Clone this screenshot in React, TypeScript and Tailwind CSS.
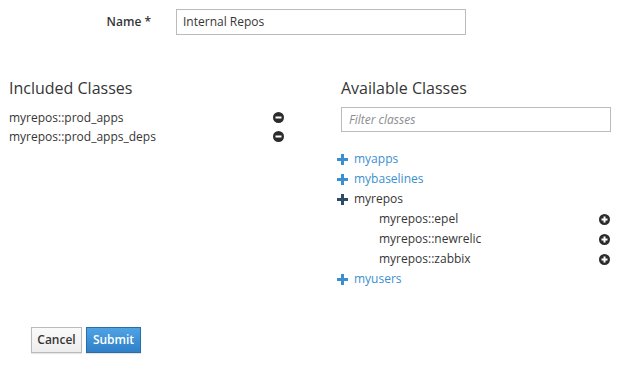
import React from "react";

const font = { fontFamily: '"Open Sans", "Noto Sans", sans-serif' };

function Plus({ color }: { color: string }) {
  return (
    <svg width="11" height="11" viewBox="0 0 11 11" className="shrink-0">
      <rect x="4" y="0" width="3" height="11" fill={color} />
      <rect x="0" y="4" width="11" height="3" fill={color} />
    </svg>
  );
}

function CircleIcon({ plus }: { plus?: boolean }) {
  return (
    <svg width="11" height="11" viewBox="0 0 11 11" className="shrink-0">
      <circle cx="5.5" cy="5.5" r="5.5" fill="#2b2b2b" />
      <rect x="2.5" y="4.5" width="6" height="2" fill="#fff" />
      {plus && <rect x="4.5" y="2.5" width="2" height="6" fill="#fff" />}
    </svg>
  );
}

export default function App() {
  const included = ["myrepos::prod_apps", "myrepos::prod_apps_deps"];
  return (
    <div className="w-[622px] h-[370px] bg-white text-[#363636]" style={font}>
      <div className="flex items-center pt-[9px]">
        <label className="w-[151px] text-right text-[12px] font-semibold text-[#363636]">Name *</label>
        <div className="ml-[25px] w-[290px] h-[26px] border border-[#bbbbbb] flex items-center px-[6px] text-[12px] text-[#363636]">
          Internal Repos
        </div>
      </div>

      <div className="flex mt-[42px]">
        <div className="w-[341px] pl-[9px]">
          <div className="text-[16px] leading-[22px]">Included Classes</div>
          <div className="mt-[9px] w-[275px]">
            {included.map((c) => (
              <div key={c} className="flex items-center justify-between h-[19px] text-[12px]">
                <span>{c}</span>
                <CircleIcon />
              </div>
            ))}
          </div>
        </div>
        <div className="w-[270px]">
          <div className="text-[16px] leading-[22px]">Available Classes</div>
          <div className="mt-[8px] h-[25px] border border-[#bbbbbb] flex items-center px-[7px] text-[12px] italic text-[#8b8d8f]">
            Filter classes
          </div>
          <div className="mt-[17px] -ml-[4px] text-[12px]">
            {["myapps", "mybaselines"].map((n) => (
              <div key={n} className="flex items-center h-[20px] gap-[6px] text-[#3b8fd0]">
                <Plus color="#3b8fd0" />
                <span>{n}</span>
              </div>
            ))}
            <div className="flex items-center h-[20px] gap-[6px] text-[#363636]">
              <Plus color="#2d4a66" />
              <span>myrepos</span>
            </div>
            {["myrepos::epel", "myrepos::newrelic", "myrepos::zabbix"].map((n) => (
              <div key={n} className="flex items-center justify-between h-[20px] pl-[42px] pr-[1px]">
                <span>{n}</span>
                <CircleIcon plus />
              </div>
            ))}
            <div className="flex items-center h-[20px] gap-[6px] text-[#3b8fd0]">
              <Plus color="#3b8fd0" />
              <span>myusers</span>
            </div>
          </div>
        </div>
      </div>

      <div className="flex gap-[4px] pl-[31px] mt-[38px]">
        <button className="w-[51px] h-[26px] border border-[#bbbbbb] bg-gradient-to-b from-[#fafafa] to-[#ededed] text-[12px] font-semibold text-[#363636] shadow-[0_1px_1px_rgba(0,0,0,0.1)]">
          Cancel
        </button>
        <button className="w-[55px] h-[26px] border border-[#2a6ea8] bg-gradient-to-b from-[#4fa3e3] to-[#2f80c8] text-[12px] font-semibold text-white shadow-[0_1px_1px_rgba(0,0,0,0.1)]">
          Submit
        </button>
      </div>
    </div>
  );
}
